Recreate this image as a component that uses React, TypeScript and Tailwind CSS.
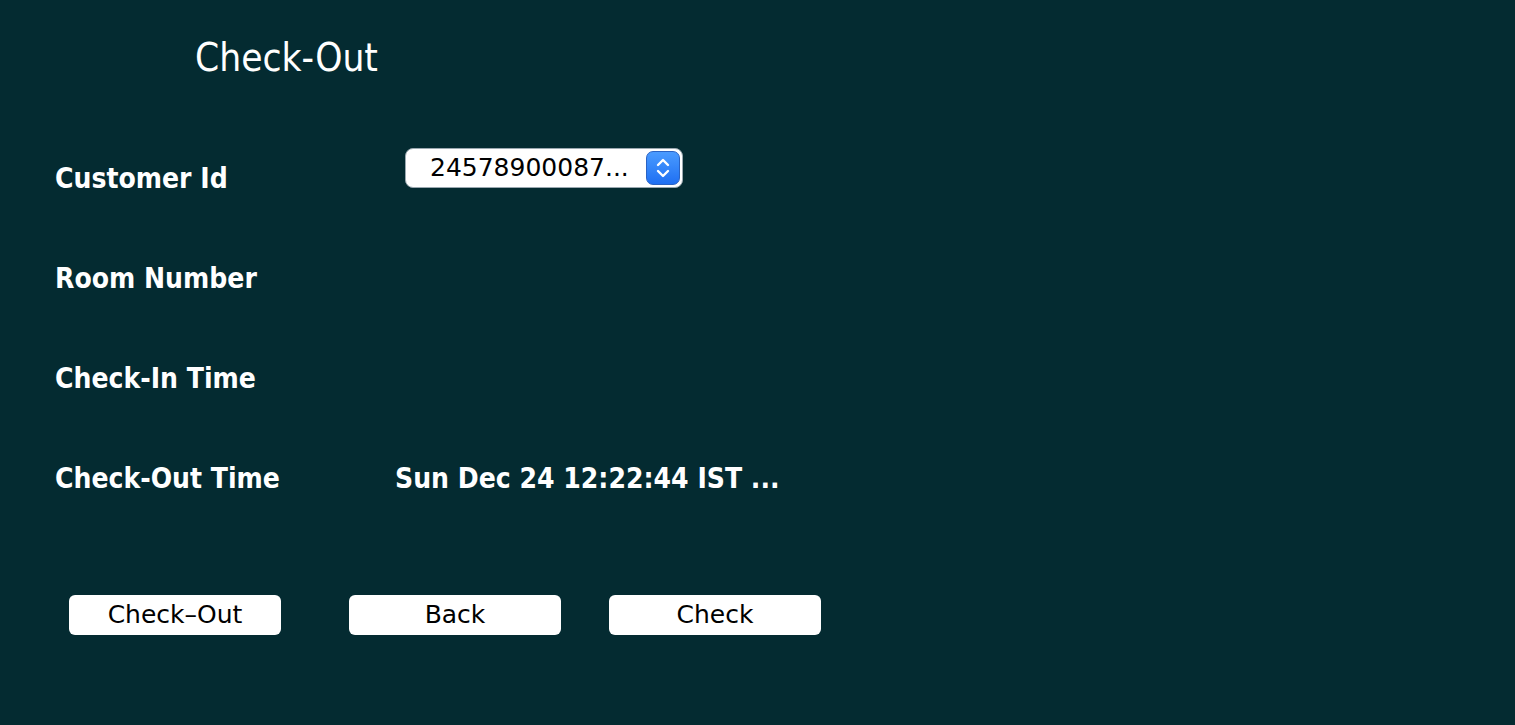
const font = "font-['DejaVu_Sans_Condensed','DejaVu_Sans',sans-serif]";
const plain = "font-['DejaVu_Sans',sans-serif]";

const rows = [
  { label: "Customer Id", kind: "select" },
  { label: "Room Number", kind: "empty" },
  { label: "Check-In Time", kind: "empty" },
  { label: "Check-Out Time", kind: "text", value: "Sun Dec 24 12:22:44 IST ..." },
];

const Stepper = () => (
  <div className="w-[34px] h-[34px] rounded-[7px] bg-gradient-to-b from-[#4a9bff] to-[#1f6ff2] border border-[#2a63c4] flex items-center justify-center">
    <svg width="18" height="26" viewBox="0 0 18 26" fill="none">
      <path d="M4 10 L9 5 L14 10" stroke="white" strokeWidth="2.4" strokeLinecap="round" strokeLinejoin="round" />
      <path d="M4 16 L9 21 L14 16" stroke="white" strokeWidth="2.4" strokeLinecap="round" strokeLinejoin="round" />
    </svg>
  </div>
);

const App = () => {
  return (
    <div className={`w-[1515px] h-[725px] bg-[#042b31] text-white ${font} pl-[55px]`}>
      <div className="h-[128px] pl-[140px] pt-[30px]">
        <h1 className="text-[38.5px] leading-[56px] font-normal">Check-Out</h1>
      </div>

      <div className="flex flex-col">
        {rows.map((row) => (
          <div key={row.label} className="h-[100px] flex items-center pt-[2px]">
            <div className="w-[340px] text-[28px] font-bold">{row.label}</div>
            {row.kind === "select" && (
              <div className="self-start mt-[18px] ml-[10px] w-[278px] h-[40px] bg-white rounded-[8px] border border-[#9aa8b0] flex items-center justify-between pl-[24px] pr-[2px]">
                <span className={`text-black text-[25px] ${plain}`}>24578900087...</span>
                <Stepper />
              </div>
            )}
            {row.kind === "text" && (
              <div className="text-[28px] font-bold">{row.value}</div>
            )}
          </div>
        ))}
      </div>

      <div className="flex pl-[14px] mt-[67px]">
        <button className={`w-[212px] h-[40px] bg-white rounded-[6px] text-black text-[25px] ${plain} flex items-center justify-center`}>
          Check{"\u2013"}Out
        </button>
        <button className={`ml-[68px] w-[212px] h-[40px] bg-white rounded-[6px] text-black text-[25px] ${plain} flex items-center justify-center`}>
          Back
        </button>
        <button className={`ml-[48px] w-[212px] h-[40px] bg-white rounded-[6px] text-black text-[25px] ${plain} flex items-center justify-center`}>
          Check
        </button>
      </div>
    </div>
  );
};

export default App;
